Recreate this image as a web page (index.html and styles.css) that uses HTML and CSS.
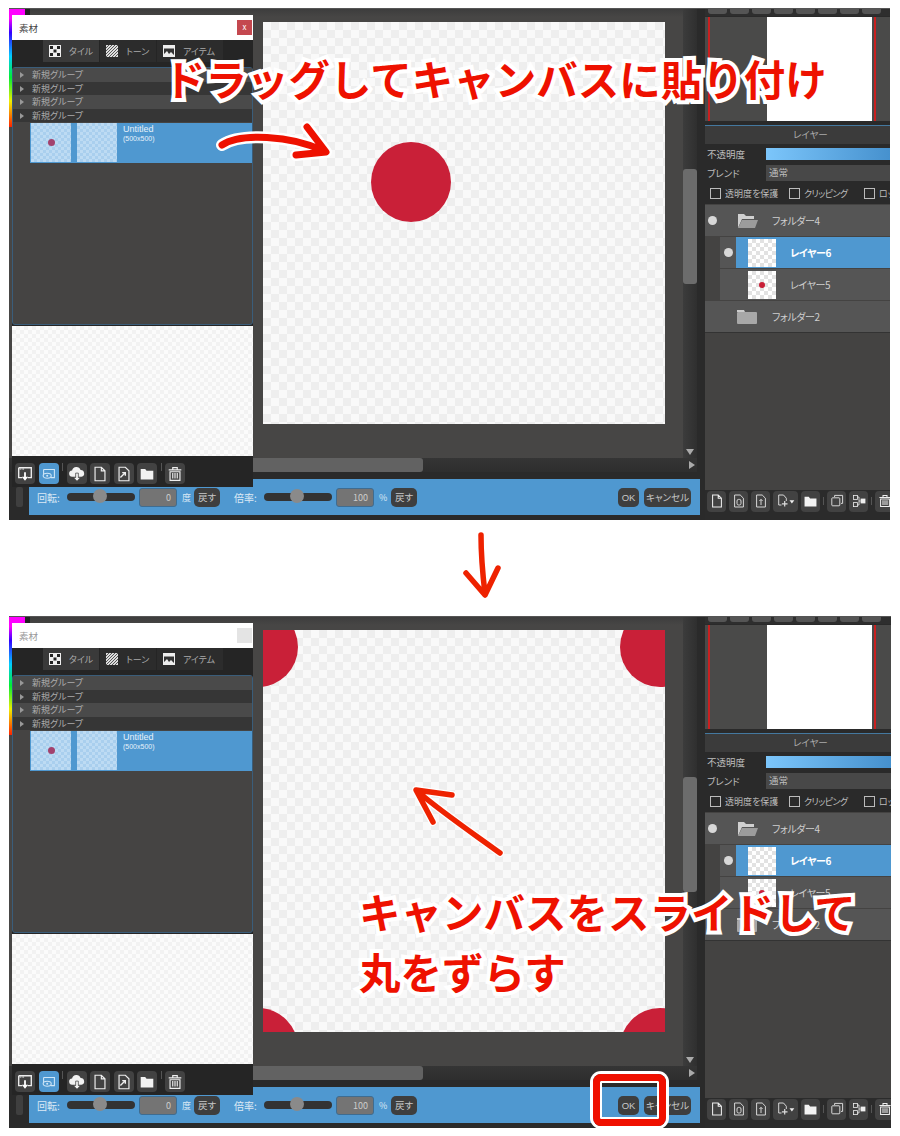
FILE: index.html
```html
<!DOCTYPE html>
<html lang="ja">
<head>
    <meta charset="utf-8">
    <title>素材をキャンバスに貼り付け</title>
    <link rel="stylesheet" href="styles.css">
</head>
<body>
    <svg class="icon-defs" width="0" height="0">
        <symbol id="i-import" viewBox="0 0 20 20"><path d="M3 3h14v11h-4M3 3v11h4" fill="none" stroke="#eee" stroke-width="1.5"/><path d="M4 4.500h2M7 4.500h2" stroke="#eee"/><path d="M9 8h2v5h2.500L10 17.500 6.500 13H9z" fill="#fff"/></symbol>
        <symbol id="i-view" viewBox="0 0 20 20"><path d="M4 5h12v9h-4" fill="none" stroke="#cfe6f7" stroke-width="1.200"/><path d="M4 5v8" stroke="#cfe6f7" stroke-width="1.200"/><ellipse cx="8" cy="12" rx="4.500" ry="2.800" fill="#4f98d0" stroke="#cfe6f7" stroke-width="1.200"/><circle cx="8" cy="12" r="1.100" fill="#cfe6f7"/></symbol>
        <symbol id="i-cloud" viewBox="0 0 20 20"><path d="M5 13a3.500 3.500 0 0 1-.5-7A5 5 0 0 1 14 5.500 3.800 3.800 0 0 1 15 13z" fill="#f2f2f2"/><path d="M8.500 9h3v5H14l-4 4-4-4h2.500z" fill="#f2f2f2" stroke="#3d3d3d" stroke-width=".8"/></symbol>
        <symbol id="i-page" viewBox="0 0 20 20"><path d="M4.500 2.500h7l4 4v11h-11zM11.500 2.500v4h4" fill="none" stroke="#eee" stroke-width="1.300"/></symbol>
        <symbol id="i-page-in" viewBox="0 0 20 20"><path d="M4.500 2.500h7l4 4v11h-11z" fill="none" stroke="#eee" stroke-width="1.300"/><path d="M6 14l5-5M8 8.500h3.500V12" fill="none" stroke="#eee" stroke-width="1.500"/></symbol>
        <symbol id="i-page-8" viewBox="0 0 20 20"><path d="M4.500 2.500h7l4 4v11h-11z" fill="none" stroke="#ddd" stroke-width="1.200"/><rect x="7.500" y="8" width="5" height="7" rx="2" fill="none" stroke="#ddd" stroke-width="1.200"/></symbol>
        <symbol id="i-page-1" viewBox="0 0 20 20"><path d="M4.500 2.500h7l4 4v11h-11z" fill="none" stroke="#ddd" stroke-width="1.200"/><path d="M10 15V8M8 10l2-2 2 2" fill="none" stroke="#ddd" stroke-width="1.200"/></symbol>
        <symbol id="i-page-plus" viewBox="0 0 26 20"><path d="M8 15H4.500V2.500h6l3.500 4V10" fill="none" stroke="#ddd" stroke-width="1.200"/><path d="M12 10v7M8.500 13.500h7" stroke="#ddd" stroke-width="1.500"/><path d="M18 9h6l-3 4z" fill="#eee"/></symbol>
        <symbol id="i-folder" viewBox="0 0 20 20"><path d="M3 4.500h5l1.500 2H17v9.500H3z" fill="#f2f2f2"/></symbol>
        <symbol id="i-copy" viewBox="0 0 20 20"><path d="M7 5V3h10v10h-2" fill="none" stroke="#ddd" stroke-width="1.200"/><rect x="3.500" y="6" width="10" height="10" rx="1" fill="none" stroke="#ddd" stroke-width="1.200"/></symbol>
        <symbol id="i-merge" viewBox="0 0 20 20"><rect x="3" y="3" width="5" height="5" fill="none" stroke="#eee"/><rect x="3" y="12" width="5" height="5" fill="none" stroke="#eee"/><rect x="12" y="7" width="6" height="6" fill="#eee"/><path d="M8 5h2v10H8M10 10h2" fill="none" stroke="#eee"/></symbol>
        <symbol id="i-trash" viewBox="0 0 20 20"><path d="M3 5.500h14M7.500 5V3h5v2" fill="none" stroke="#eee" stroke-width="1.300"/><path d="M4.500 7.500h11V17h-11z" fill="none" stroke="#eee" stroke-width="1.300"/><path d="M7.500 9v6M10 9v6M12.500 9v6" stroke="#eee" stroke-width="1.300"/></symbol>
        <symbol id="i-tile" viewBox="0 0 12 12"><rect width="12" height="12" fill="#eee"/><path d="M1 1h3v3H1zM8 1h3v3H8zM4.500 4.500h3v3h-3zM1 8h3v3H1zM8 8h3v3H8z" fill="#222"/></symbol>
        <symbol id="i-tone" viewBox="0 0 12 12"><rect width="12" height="12" fill="#ddd"/><path d="M0 3l3-3M0 6l6-6M0 9l9-9M0 12L12 0M3 12l9-9M6 12l6-6M9 12l3-3" stroke="#333" stroke-width=".8"/></symbol>
        <symbol id="i-item" viewBox="0 0 12 12"><rect width="12" height="12" fill="#eee"/><path d="M1 3.500h10V10l-3-3-2 2-2-3-3 3z" fill="#333"/></symbol>
        <symbol id="i-folder-open" viewBox="0 0 22 16"><path d="M1 15V1h6l2 2h8v3H5z" fill="#d0d0d0"/><path d="M1 15l4-8h16l-3 8z" fill="#9c9c9c"/></symbol>
        <symbol id="i-folder-shut" viewBox="0 0 20 16"><path d="M0 3V1h7l1 2z" fill="#ccc"/><rect y="3" width="20" height="12" rx="1" fill="#a8a8a8"/></symbol>
    </svg>

    <div class="page">
        <section class="shot">
            <div class="rainbow"></div>
            <div class="left-col">
                <div class="work">
                    <div class="stage">
                        <div class="canvas">
                            <span class="dot dot-center"></span>
                        </div>
                    </div>
                    <div class="vscroll"><span class="vthumb"></span><span class="arrow-down"></span></div>
                    <div class="hscroll"><span class="hthumb"></span><span class="arrow-right"></span></div>
                </div>
                <div class="bar-row">
                    <div class="handle-col"><span class="handle"></span></div>
                    <div class="bar">
                        <span class="bar-label">回転:</span>
                        <span class="slider"><i></i></span>
                        <span class="num">0</span>
                        <span class="bar-unit">度</span>
                        <span class="btn">戻す</span>
                        <span class="bar-label bar-label-gap">倍率:</span>
                        <span class="slider"><i></i></span>
                        <span class="num">100</span>
                        <span class="bar-unit">%</span>
                        <span class="btn">戻す</span>
                        <span class="btn btn-ok">OK</span>
                        <span class="btn btn-cancel">キャンセル</span>
                    </div>
                </div>
            </div>
            <aside class="layers">
                <div class="nav-tools"><i></i><i></i><i></i><i></i><i></i><i></i><i></i><i></i></div>
                <div class="navigator"><div class="nav-page"></div></div>
                <div class="layers-head">レイヤー</div>
                <div class="prop-row"><span class="prop-name">不透明度</span><span class="opacity-bar"></span></div>
                <div class="prop-row"><span class="prop-name">ブレンド</span><span class="blend-select">通常</span></div>
                <div class="check-row">
                    <label class="check check-a">透明度を保護</label>
                    <label class="check check-b">クリッピング</label>
                    <label class="check">ロック</label>
                </div>
                <div class="layer-list">
                    <div class="layer layer-folder">
                        <span class="eye"></span>
                        <svg class="folder-icon" width="22" height="16"><use href="#i-folder-open"/></svg>
                        <span class="layer-name">フォルダー4</span>
                    </div>
                    <div class="layer layer-child layer-active">
                        <span class="eye-cell"><span class="eye"></span></span>
                        <span class="thumb"></span>
                        <span class="layer-name">レイヤー6</span>
                    </div>
                    <div class="layer layer-child">
                        <span class="eye-cell eye-cell-empty"></span>
                        <span class="thumb"><span class="thumb-dot"></span></span>
                        <span class="layer-name">レイヤー5</span>
                    </div>
                    <div class="layer layer-folder layer-folder-shut">
                        <svg class="folder-icon" width="20" height="16"><use href="#i-folder-shut"/></svg>
                        <span class="layer-name">フォルダー2</span>
                    </div>
                </div>
                <div class="tools">
                    <span class="tool"><svg width="16" height="16"><use href="#i-page"/></svg></span>
                    <span class="tool"><svg width="16" height="16"><use href="#i-page-8"/></svg></span>
                    <span class="tool"><svg width="16" height="16"><use href="#i-page-1"/></svg></span>
                    <span class="tool tool-wide"><svg width="21" height="16"><use href="#i-page-plus"/></svg></span>
                    <span class="tool"><svg width="17" height="17"><use href="#i-folder"/></svg></span>
                    <span class="tool-sep"></span>
                    <span class="tool"><svg width="16" height="16"><use href="#i-copy"/></svg></span>
                    <span class="tool"><svg width="16" height="16"><use href="#i-merge"/></svg></span>
                    <span class="tool-sep"></span>
                    <span class="tool"><svg width="16" height="16"><use href="#i-trash"/></svg></span>
                </div>
            </aside>

            <div class="material">
                <div class="material-title">素材<span class="close">x</span></div>
                <div class="tabs">
                    <span class="tab tab-on"><svg width="12" height="12"><use href="#i-tile"/></svg>タイル</span>
                    <span class="tab"><svg width="12" height="12"><use href="#i-tone"/></svg>トーン</span>
                    <span class="tab tab-wide"><svg width="12" height="12"><use href="#i-item"/></svg>アイテム</span>
                </div>
                <div class="groups">
                    <div class="group">新規グループ</div>
                    <div class="group group-alt">新規グループ</div>
                    <div class="group">新規グループ</div>
                    <div class="group group-alt">新規グループ</div>
                    <div class="item">
                        <span class="item-thumb"><span class="item-dot"></span></span>
                        <span class="item-thumb"></span>
                        <span class="item-text">Untitled<small>(500x500)</small></span>
                    </div>
                </div>
                <div class="preview"></div>
                <div class="material-tools">
                    <span class="tool"><svg width="18" height="18"><use href="#i-import"/></svg></span>
                    <span class="tool tool-on"><svg width="18" height="18"><use href="#i-view"/></svg></span>
                    <span class="tool-sep"></span>
                    <span class="tool"><svg width="18" height="18"><use href="#i-cloud"/></svg></span>
                    <span class="tool"><svg width="18" height="18"><use href="#i-page"/></svg></span>
                    <span class="tool"><svg width="18" height="18"><use href="#i-page-in"/></svg></span>
                    <span class="tool"><svg width="18" height="18"><use href="#i-folder"/></svg></span>
                    <span class="tool-sep"></span>
                    <span class="tool"><svg width="18" height="18"><use href="#i-trash"/></svg></span>
                </div>
            </div>

            <div class="note note-top">ドラッグしてキャンバスに貼り付け</div>
            <svg class="curve" width="130" height="60" viewBox="0 0 130 60">
                <g fill="none" stroke-linecap="round" stroke-linejoin="round">
                    <path d="M7 24C25 12 75 14 109 30M92 6l19 25-30 3" stroke="#fff" stroke-width="12"/>
                    <path d="M7 24C25 12 75 14 109 30M92 6l19 25-30 3" stroke="#ee1100" stroke-width="7"/>
                </g>
            </svg>
        </section>

        <div class="next-arrow">
            <svg width="40" height="66" viewBox="0 0 40 66">
                <path d="M20 3C20 25 22 45 24 62M5 41l19 22 13-27" fill="none" stroke="#ee2200" stroke-width="5.500" stroke-linecap="round" stroke-linejoin="round"/>
            </svg>
        </div>

        <section class="shot shot-after">
            <div class="rainbow"></div>
            <div class="left-col">
                <div class="work">
                    <div class="stage">
                        <div class="canvas">
                            <span class="dot dot-tl"></span>
                            <span class="dot dot-tr"></span>
                            <span class="dot dot-bl"></span>
                            <span class="dot dot-br"></span>
                        </div>
                    </div>
                    <div class="vscroll"><span class="vthumb"></span><span class="arrow-down"></span></div>
                    <div class="hscroll"><span class="hthumb"></span><span class="arrow-right"></span></div>
                </div>
                <div class="bar-row">
                    <div class="handle-col"><span class="handle"></span></div>
                    <div class="bar">
                        <span class="bar-label">回転:</span>
                        <span class="slider"><i></i></span>
                        <span class="num">0</span>
                        <span class="bar-unit">度</span>
                        <span class="btn">戻す</span>
                        <span class="bar-label bar-label-gap">倍率:</span>
                        <span class="slider"><i></i></span>
                        <span class="num">100</span>
                        <span class="bar-unit">%</span>
                        <span class="btn">戻す</span>
                        <span class="btn btn-ok">OK</span>
                        <span class="btn btn-cancel">キャンセル</span>
                    </div>
                </div>
            </div>
            <aside class="layers">
                <div class="nav-tools"><i></i><i></i><i></i><i></i><i></i><i></i><i></i><i></i></div>
                <div class="navigator"><div class="nav-page"></div></div>
                <div class="layers-head">レイヤー</div>
                <div class="prop-row"><span class="prop-name">不透明度</span><span class="opacity-bar"></span></div>
                <div class="prop-row"><span class="prop-name">ブレンド</span><span class="blend-select">通常</span></div>
                <div class="check-row">
                    <label class="check check-a">透明度を保護</label>
                    <label class="check check-b">クリッピング</label>
                    <label class="check">ロック</label>
                </div>
                <div class="layer-list">
                    <div class="layer layer-folder">
                        <span class="eye"></span>
                        <svg class="folder-icon" width="22" height="16"><use href="#i-folder-open"/></svg>
                        <span class="layer-name">フォルダー4</span>
                    </div>
                    <div class="layer layer-child layer-active">
                        <span class="eye-cell"><span class="eye"></span></span>
                        <span class="thumb"></span>
                        <span class="layer-name">レイヤー6</span>
                    </div>
                    <div class="layer layer-child">
                        <span class="eye-cell eye-cell-empty"></span>
                        <span class="thumb"><span class="thumb-dot"></span></span>
                        <span class="layer-name">レイヤー5</span>
                    </div>
                    <div class="layer layer-folder layer-folder-shut">
                        <svg class="folder-icon" width="20" height="16"><use href="#i-folder-shut"/></svg>
                        <span class="layer-name">フォルダー2</span>
                    </div>
                </div>
                <div class="tools">
                    <span class="tool"><svg width="16" height="16"><use href="#i-page"/></svg></span>
                    <span class="tool"><svg width="16" height="16"><use href="#i-page-8"/></svg></span>
                    <span class="tool"><svg width="16" height="16"><use href="#i-page-1"/></svg></span>
                    <span class="tool tool-wide"><svg width="21" height="16"><use href="#i-page-plus"/></svg></span>
                    <span class="tool"><svg width="17" height="17"><use href="#i-folder"/></svg></span>
                    <span class="tool-sep"></span>
                    <span class="tool"><svg width="16" height="16"><use href="#i-copy"/></svg></span>
                    <span class="tool"><svg width="16" height="16"><use href="#i-merge"/></svg></span>
                    <span class="tool-sep"></span>
                    <span class="tool"><svg width="16" height="16"><use href="#i-trash"/></svg></span>
                </div>
            </aside>

            <div class="material material-idle">
                <div class="material-title">素材<span class="close"></span></div>
                <div class="tabs">
                    <span class="tab tab-on"><svg width="12" height="12"><use href="#i-tile"/></svg>タイル</span>
                    <span class="tab"><svg width="12" height="12"><use href="#i-tone"/></svg>トーン</span>
                    <span class="tab tab-wide"><svg width="12" height="12"><use href="#i-item"/></svg>アイテム</span>
                </div>
                <div class="groups">
                    <div class="group">新規グループ</div>
                    <div class="group group-alt">新規グループ</div>
                    <div class="group">新規グループ</div>
                    <div class="group group-alt">新規グループ</div>
                    <div class="item">
                        <span class="item-thumb"><span class="item-dot"></span></span>
                        <span class="item-thumb"></span>
                        <span class="item-text">Untitled<small>(500x500)</small></span>
                    </div>
                </div>
                <div class="preview"></div>
                <div class="material-tools">
                    <span class="tool"><svg width="18" height="18"><use href="#i-import"/></svg></span>
                    <span class="tool tool-on"><svg width="18" height="18"><use href="#i-view"/></svg></span>
                    <span class="tool-sep"></span>
                    <span class="tool"><svg width="18" height="18"><use href="#i-cloud"/></svg></span>
                    <span class="tool"><svg width="18" height="18"><use href="#i-page"/></svg></span>
                    <span class="tool"><svg width="18" height="18"><use href="#i-page-in"/></svg></span>
                    <span class="tool"><svg width="18" height="18"><use href="#i-folder"/></svg></span>
                    <span class="tool-sep"></span>
                    <span class="tool"><svg width="18" height="18"><use href="#i-trash"/></svg></span>
                </div>
            </div>

            <svg class="slide-arrow" width="100" height="80" viewBox="0 0 100 80">
                <g fill="none" stroke-linecap="round" stroke-linejoin="round">
                    <path d="M86 69C60 50 30 30 3 7M38 11L2 6l17 32" stroke="#fff" stroke-width="8"/>
                    <path d="M86 69C60 50 30 30 3 7M38 11L2 6l17 32" stroke="#ee2200" stroke-width="5.500"/>
                </g>
            </svg>
            <div class="note note-bottom">キャンバスをスライドして<br>丸をずらす</div>
            <div class="ok-mark"></div>
        </section>
    </div>
</body>
</html>
```

FILE: styles.css
```css
* {
    box-sizing: border-box;
}
body {
    margin: 0;
    background: #fff;
    font-family: "Noto Sans CJK JP", "Noto Sans", sans-serif;
    font-size: 10px;
    font-feature-settings: "palt";
    color: #bdbdbd;
}
.icon-defs {
    position: absolute;
}
.page {
    width: 900px;
    padding: 8px 0 0 9px;
}

/* one app screenshot */
.shot {
    position: relative;
    display: grid;
    grid-template-columns: 694px 187px;
    width: 881px;
    height: 512px;
    overflow: hidden;
    background: #2a2a2a;
    border-top: 1px solid #555;
}
.shot-after {
    grid-template-columns: 694px 188px;
    width: 882px;
}
.rainbow {
    position: absolute;
    left: 0;
    top: 0;
    width: 16px;
    height: 118px;
    background: linear-gradient(#f0f 0%, #f0f 8%, #30f 20%, #0cf 40%, #0e3 58%, #ee0 78%, #f20 100%);
}
.rainbow::after {
    content: "";
    position: absolute;
    left: 16px;
    top: 0;
    width: 5px;
    height: 7px;
    background: #222;
}

/* canvas side */
.left-col {
    display: flex;
    flex-direction: column;
}
.work {
    display: grid;
    grid-template-columns: 1fr 14px;
    grid-template-rows: 1fr 14px;
    height: 463px;
    margin-right: 6px;
    background: #454443;
}
.stage {
    padding: 13px 0 0 254px;
    overflow: hidden;
    background: linear-gradient(#3d3d3d, #474645 8px);
}
.canvas {
    position: relative;
    width: 402px;
    height: 402px;
    overflow: hidden;
    background: conic-gradient(#eeeeee 25%, #f9f9f9 0 50%, #eeeeee 0 75%, #f9f9f9 0) 0 0 / 16px 16px;
}
.dot {
    position: absolute;
    width: 80px;
    height: 80px;
    border-radius: 50%;
    background: #c92038;
}
.dot-center {
    left: 108px;
    top: 120px;
}
.dot-tl {
    left: -45px;
    top: -23px;
}
.dot-tr {
    left: 357px;
    top: -23px;
}
.dot-bl {
    left: -45px;
    top: 378px;
}
.dot-br {
    left: 357px;
    top: 378px;
}
.vscroll {
    position: relative;
    background: linear-gradient(90deg, #3c3c3c, #2f2f2f);
}
.vthumb {
    position: absolute;
    left: 0;
    top: 160px;
    width: 14px;
    height: 115px;
    border-radius: 3px;
    background: #6c6c6c;
}
.arrow-down {
    position: absolute;
    left: 3px;
    bottom: 3px;
    border: 4px solid transparent;
    border-top: 6px solid #aaa;
    border-bottom: 0;
}
.hscroll {
    position: relative;
    grid-column: 1 / 3;
    background: linear-gradient(#353535, #2e2e2e);
}
.hthumb {
    position: absolute;
    left: 240px;
    top: 0;
    width: 174px;
    height: 14px;
    border-radius: 3px;
    background: #626262;
}
.arrow-right {
    position: absolute;
    right: 2px;
    top: 3px;
    border: 4px solid transparent;
    border-left: 6px solid #aaa;
    border-right: 0;
}

/* blue option bar */
.bar-row {
    display: flex;
    height: 36px;
    margin-top: 7px;
    padding-right: 3px;
}
.handle-col {
    display: flex;
    align-items: center;
    width: 20px;
    padding-left: 7px;
}
.handle {
    width: 7px;
    height: 20px;
    border-radius: 2px;
    background: #3f3f3f;
}
.bar {
    flex: 1;
    display: flex;
    align-items: center;
    padding: 0 9px 0 8px;
    background: #4f98d0;
    color: #dbe9f5;
}
.bar-label {
    width: 30px;
    font-size: 10px;
}
.bar-label-gap {
    margin-left: 14px;
}
.slider {
    position: relative;
    width: 68px;
    height: 8px;
    border-radius: 4px;
    background: #333;
}
.slider i {
    position: absolute;
    left: 26px;
    top: -4px;
    width: 14px;
    height: 14px;
    border-radius: 50%;
    background: #8a8a8a;
}
.num {
    width: 38px;
    height: 19px;
    margin-left: 4px;
    padding-right: 5px;
    border: 1px solid #3f6c90;
    border-radius: 3px;
    background: #747474;
    color: #ccc;
    font-size: 9px;
    line-height: 17px;
    text-align: right;
}
.bar-unit {
    width: 17px;
    padding-left: 5px;
    font-size: 9px;
}
.btn {
    height: 19px;
    padding: 0 4px;
    border-radius: 5px;
    background: #3e3e3e;
    color: #c8c8c8;
    font-size: 9.500px;
    line-height: 19px;
    white-space: nowrap;
}
.btn-ok {
    width: 21px;
    margin-left: auto;
    margin-right: 5px;
    padding: 0;
    text-align: center;
    font-family: "Liberation Sans", sans-serif;
}
.btn-cancel {
    width: 47px;
    padding: 0;
    text-align: center;
}

/* layer panel */
.layers {
    display: flex;
    flex-direction: column;
    overflow: hidden;
    border-left: 2px solid #2a2a2a;
}
.nav-tools {
    display: flex;
    gap: 3px;
    height: 7px;
    padding-left: 3px;
    background: #2e2e2e;
}
.nav-tools i {
    width: 19px;
    height: 5px;
    border-radius: 0 0 3px 3px;
    background: #555;
}
.navigator {
    position: relative;
    height: 104px;
    margin-top: 1px;
    padding-left: 59px;
    background: #4a4a49;
    border-left: 3px solid #4a4a49;
}
.navigator::before,
.navigator::after {
    content: "";
    position: absolute;
    top: 0;
    bottom: 0;
    width: 2px;
    background: #c92020;
}
.navigator::before {
    left: 0;
}
.navigator::after {
    left: 166px;
}
.nav-page {
    width: 105px;
    height: 104px;
    background: #fff;
}
.layers-head {
    height: 19px;
    margin-top: 4px;
    padding-left: 88px;
    border-top: 1px solid #44789f;
    background: #3b3b3b;
    color: #aaa;
    font-size: 9.500px;
    line-height: 17px;
}
.prop-row {
    display: flex;
    align-items: center;
    height: 19px;
    padding: 0 0 0 2px;
    font-size: 9.500px;
}
.prop-name {
    width: 59px;
    flex: none;
}
.opacity-bar {
    flex: none;
    width: 140px;
    height: 12px;
    background: linear-gradient(90deg, #7cc6fb, #3f8ac8);
}
.blend-select {
    flex: none;
    width: 140px;
    height: 16px;
    padding-left: 3px;
    background: #484848;
    line-height: 15px;
}
.check-row {
    display: flex;
    align-items: center;
    height: 22px;
    padding-left: 5px;
    white-space: nowrap;
    font-size: 9px;
}
.check {
    display: flex;
    align-items: center;
    gap: 4px;
    flex: none;
}
.check::before {
    content: "";
    width: 9px;
    height: 9px;
    border: 1px solid #bbb;
}
.check-a {
    width: 79px;
}
.check-b {
    width: 75px;
    letter-spacing: -.6px;
}
.layer-list {
    flex: 1;
    padding: 1px 0 0;
    background: #444342;
}
.layer {
    display: flex;
    align-items: center;
    height: 31px;
    margin-bottom: 1px;
    background: #555;
    color: #cfcfcf;
    font-size: 10px;
    letter-spacing: -.4px;
}
.layer-folder {
    padding-left: 3px;
}
.layer-folder-shut {
    padding-left: 32px;
    border-bottom: 1px solid #333;
    height: 32px;
}
.eye {
    flex: none;
    width: 9px;
    height: 9px;
    border-radius: 50%;
    background: #d8d8d8;
}
.folder-icon {
    flex: none;
    margin-left: 20px;
}
.layer-folder-shut .folder-icon {
    margin-left: 0;
}
.layer-folder .layer-name {
    margin-left: 13px;
}
.layer-folder-shut .layer-name {
    margin-left: 15px;
}
.layer-child {
    margin-left: 15px;
}
.eye-cell {
    display: flex;
    align-items: center;
    justify-content: center;
    flex: none;
    width: 16px;
    align-self: stretch;
    background: #555;
}
.layer-active {
    background: #4f98d0;
    color: #fff;
    font-weight: bold;
}
.thumb {
    display: flex;
    align-items: center;
    justify-content: center;
    flex: none;
    width: 28px;
    height: 28px;
    margin-left: 12px;
    background: conic-gradient(#e2e2e2 25%, #fff 0 50%, #e2e2e2 0 75%, #fff 0) 0 0 / 8px 8px;
}
.thumb-dot {
    width: 6px;
    height: 6px;
    border-radius: 50%;
    background: #c92038;
}
.layer-child .layer-name {
    margin-left: 14px;
}
.tools {
    display: flex;
    align-items: center;
    gap: 3px;
    height: 30px;
    padding: 0 0 8px 2px;
    background: #2b2b2b;
}
.tool {
    display: flex;
    align-items: center;
    justify-content: center;
    flex: none;
    width: 19px;
    height: 21px;
    border-radius: 4px;
    background: #424242;
}
.tool-wide {
    width: 25px;
}
.tool-on {
    background: #4f98d0;
}
.tool-sep {
    flex: none;
    width: 1px;
    height: 8px;
    background: #555;
}

/* floating material window */
.material {
    position: absolute;
    left: 3px;
    top: 6px;
    display: flex;
    flex-direction: column;
    width: 241px;
    height: 472px;
    background: #252525;
}
.material-title {
    display: flex;
    align-items: center;
    justify-content: space-between;
    flex: none;
    height: 25px;
    padding: 0 1px 0 7px;
    background: #fff;
    color: #444;
    font-size: 9.500px;
}
.material-idle .material-title {
    color: #999;
}
.close {
    width: 15px;
    height: 15px;
    background: #c4484f;
    color: #fff;
    font-size: 8px;
    line-height: 14px;
    text-align: center;
}
.material-idle .close {
    background: #e4e4e4;
}
.tabs {
    display: flex;
    flex: none;
    height: 22px;
    padding-left: 31px;
    gap: 1px;
}
.tab {
    display: flex;
    align-items: center;
    gap: 8px;
    flex: none;
    width: 56px;
    padding-left: 6px;
    background: #2c2c2c;
    color: #aaa;
    font-size: 9px;
}
.tab-on {
    background: #3a3a3a;
}
.tab-wide {
    width: 66px;
}
.groups {
    flex: none;
    height: 258px;
    margin: 5px 0 0;
    background: #454443;
    border: 1px solid #3a5d7a;
    border-radius: 3px;
}
.group {
    position: relative;
    height: 13.500px;
    padding-left: 19px;
    background: #4a4a4a;
    color: #aaa;
    font-size: 9px;
    line-height: 13px;
}
.group::before {
    content: "";
    position: absolute;
    left: 7px;
    top: 4px;
    border: 3px solid transparent;
    border-left: 4px solid #999;
    border-right: 0;
}
.group-alt {
    background: #363636;
}
.item {
    display: flex;
    gap: 6px;
    height: 40px;
    margin: 1px 0 0 17px;
    padding: 0 0 1px 1px;
    background: #4f98d0;
    color: #e6f1fa;
}
.item-thumb {
    display: flex;
    align-items: center;
    justify-content: center;
    width: 40px;
    background: conic-gradient(#a9cfee 25%, #bddbf3 0 50%, #a9cfee 0 75%, #bddbf3 0) 0 0 / 6px 6px;
}
.item-dot {
    width: 7px;
    height: 7px;
    border-radius: 50%;
    background: #a2426e;
}
.item-text {
    display: flex;
    flex-direction: column;
    padding: 1px 0 0;
    font-family: "Liberation Sans", sans-serif;
    font-size: 9px;
    line-height: 11px;
}
.item-text small {
    font-size: 7px;
    line-height: 8px;
}
.preview {
    flex: none;
    height: 130px;
    margin-top: 1px;
    background: conic-gradient(#f2f2f2 25%, #fbfbfb 0 50%, #f2f2f2 0 75%, #fbfbfb 0) 0 0 / 8px 8px;
}
.material-tools {
    flex: 1;
    display: flex;
    align-items: flex-start;
    gap: 3.500px;
    padding: 7px 0 0 3px;
}
.material-tools .tool {
    width: 20px;
}

/* red annotations */
.note {
    position: absolute;
    color: #ee1100;
    font-weight: bold;
    font-size: 41.500px;
    font-feature-settings: normal;
    white-space: nowrap;
    -webkit-text-stroke: 8px #fff;
    paint-order: stroke fill;
}
.note-top {
    left: 155px;
    top: 38px;
    line-height: 62px;
}
.note-bottom {
    left: 350px;
    top: 264px;
    line-height: 60px;
}
.curve {
    position: absolute;
    left: 206px;
    top: 112px;
}
.slide-arrow {
    position: absolute;
    left: 405px;
    top: 167px;
    overflow: visible;
}
.next-arrow {
    display: flex;
    justify-content: center;
    height: 96px;
    padding: 12px 0 0 53px;
}
.ok-mark {
    position: absolute;
    left: 584px;
    top: 457px;
    width: 73px;
    height: 52px;
    border: 7px solid #f01000;
    border-radius: 8px;
    box-shadow: 0 0 0 3px #fff, inset 0 0 0 2px #fff;
}
```
